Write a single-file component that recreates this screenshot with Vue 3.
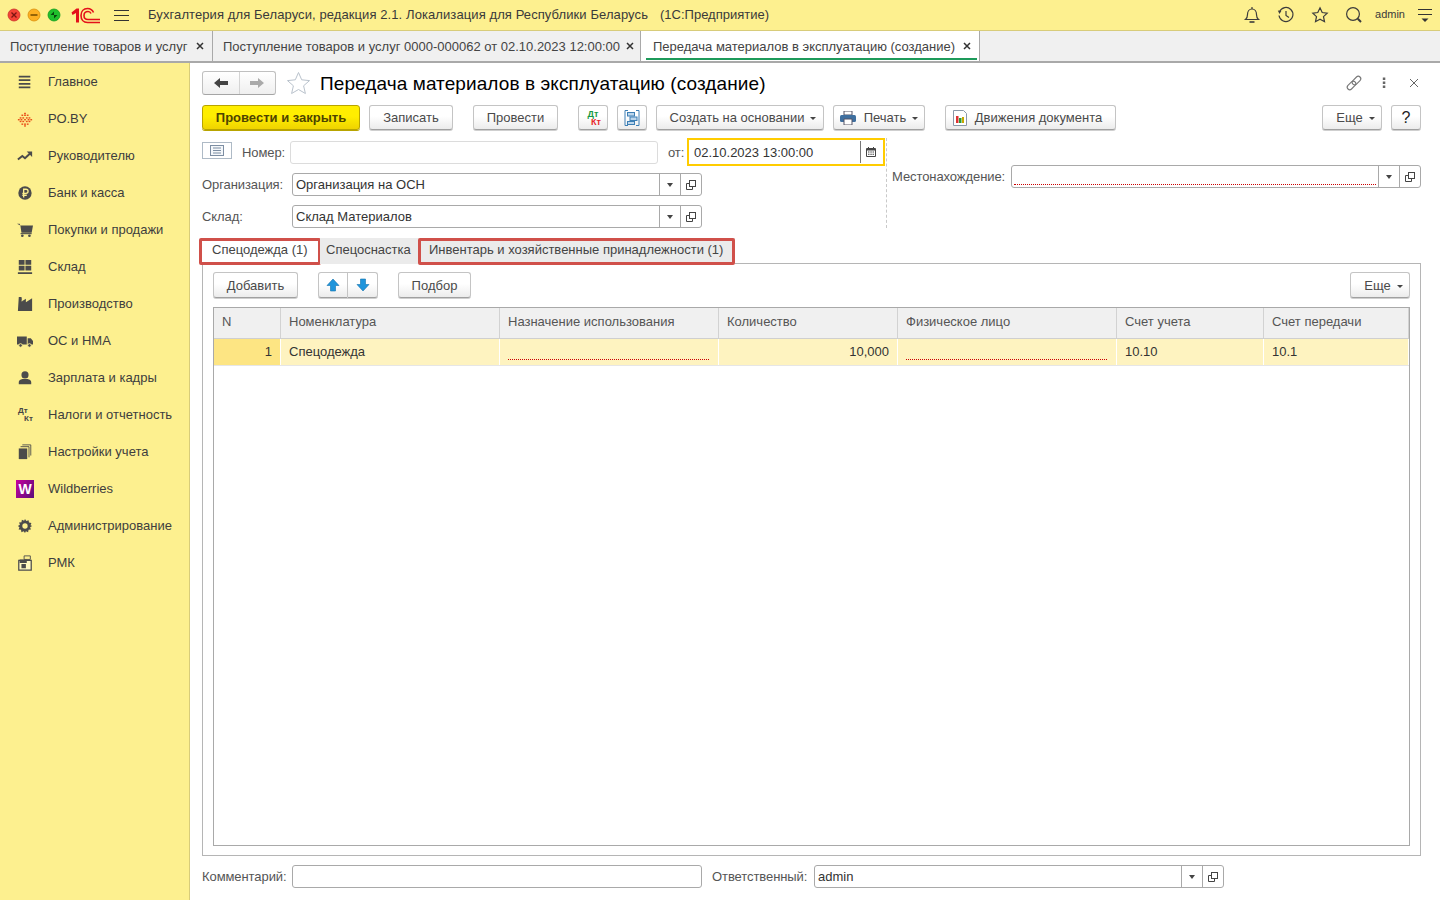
<template>
  <div class="app">
    <header class="topbar">
      <div class="lights">
        <svg width="14" height="14" viewBox="0 0 14 14"><circle cx="7" cy="7" r="6" fill="#f44336" stroke="#c9302c" stroke-width=".8"/><path d="M4.5 4.5l5 5M9.5 4.5l-5 5" stroke="#7a1512" stroke-width="1.3"/></svg>
        <svg width="14" height="14" viewBox="0 0 14 14"><circle cx="7" cy="7" r="6" fill="#fdb022" stroke="#d98e0c" stroke-width=".8"/><path d="M3.5 7h7" stroke="#7c5200" stroke-width="1.6"/></svg>
        <svg width="14" height="14" viewBox="0 0 14 14"><circle cx="7" cy="7" r="6" fill="#1fc02c" stroke="#129a1e" stroke-width=".8"/><path d="M3.5 7L7 3.5V7zM10.5 7L7 10.5V7z" fill="#07480d"/></svg>
      </div>
      <svg class="logo" width="30" height="17" viewBox="0 0 30 17" fill="none" stroke="#e3101a">
        <path d="M0.5 5.500L5.500 1.500H8V15.500H5V6L1.500 8" fill="#e3101a" stroke="none"/>
        <path d="M29 15.500H16.500C12.500 15.500 10 12.500 10 8.500S12.500 1.500 16.500 1.500C19.500 1.500 21.500 3 22.500 5.500" stroke-width="1.6"/>
        <path d="M29 12.500H17C14.500 12.500 13 11 13 8.500S14.500 4.500 17 4.500C18.500 4.500 19.500 5.200 20 6.500" stroke-width="1.6"/>
      </svg>
      <svg class="burger" width="16" height="13" viewBox="0 0 16 13"><path d="M0 1.5h15M0 6.5h15M0 11.5h15" stroke="#333" stroke-width="1"/></svg>
      <div class="app-title"><span class="app-name">Бухгалтерия для Беларуси, редакция 2.1. Локализация для Республики Беларусь</span><span class="app-kind">(1С:Предприятие)</span></div>
      <div class="top-actions">
        <svg width="18" height="18" viewBox="0 0 18 18" fill="none" stroke="#3c3c3c" stroke-width="1.2"><path d="M2.5 13.5c1.5-1.2 2-2.6 2-5 0-3 1.8-5.5 4.5-5.5s4.500 2.500 4.500 5.500c0 2.400.5 3.800 2 5z"/><path d="M6.500 16h5" stroke-width="1.6"/><path d="M9 1v2"/></svg>
        <svg width="18" height="18" viewBox="0 0 18 18" fill="none" stroke="#3c3c3c" stroke-width="1.2"><path d="M2.600 5.500A7 7 0 1 1 2 9.500"/><path d="M0.800 4.500l3.500 0.500-1.800 3z" fill="#3c3c3c" stroke="none"/><path d="M9 5v4.500l3 2"/></svg>
        <svg width="18" height="18" viewBox="0 0 18 18" fill="none" stroke="#3c3c3c" stroke-width="1.2"><path d="M9 1.800l2.200 4.700 5 .6-3.700 3.500 1 5.100L9 13.200l-4.500 2.500 1-5.100L1.800 7.100l5-.6z"/></svg>
        <svg width="18" height="18" viewBox="0 0 18 18" fill="none" stroke="#3c3c3c"><circle cx="8" cy="8" r="6.4" stroke-width="1.2"/><path d="M12.800 12.800l3.200 3.200" stroke-width="2"/></svg>
        <span class="admin">admin</span>
        <svg width="16" height="14" viewBox="0 0 16 14"><path d="M1 1.5h14M1 6.5h14" stroke="#333"/><path d="M4.500 10.500h7L8 14z" fill="#333"/></svg>
      </div>
    </header>

    <nav class="doc-tabs">
      <div v-for="t in docTabs" :key="t.text" class="doc-tab" :class="t.cls">
        <span>{{ t.text }}</span>
        <svg width="8" height="8" viewBox="0 0 8 8"><path d="M1 1l6 6M7 1L1 7" stroke="#333" stroke-width="1.5"/></svg>
      </div>
    </nav>

    <div class="body">
      <aside class="sidebar">
        <div v-for="s in sections" :key="s.text" class="section">
          <span class="section-icon">
            <span v-if="s.kind === 'dtkt'" class="mini-dtkt"><b>Дт</b><b>Кт</b></span>
            <span v-else-if="s.kind === 'wb'" class="wb">W</span>
            <svg v-else width="16" height="16" viewBox="0 0 18 18" v-html="s.icon"></svg>
          </span>
          <span>{{ s.text }}</span>
        </div>
      </aside>

      <main class="content">
        <div class="form-head">
          <div class="nav-group">
            <button class="nav-btn">
              <svg width="16" height="12" viewBox="0 0 16 12"><path d="M1 6l6-5v3h8v4H7v3z" fill="#444"/></svg>
            </button>
            <button class="nav-btn">
              <svg width="16" height="12" viewBox="0 0 16 12"><path d="M15 6L9 1v3H1v4h8v3z" fill="#aaa"/></svg>
            </button>
          </div>
          <svg class="fav" width="25" height="24" viewBox="0 0 25 24" fill="#fff" stroke="#b9c2cc"><path d="M12.500 1.500l3.200 7.300 7.800.8-5.900 5.200 1.800 7.700-6.900-4-6.900 4 1.800-7.700-5.900-5.200 7.800-.8z"/></svg>
          <h1>Передача материалов в эксплуатацию (создание)</h1>
          <div class="head-tools">
            <svg width="18" height="18" viewBox="0 0 18 18" fill="none" stroke="#777" stroke-width="1.1"><g transform="rotate(-45 9 9)"><rect x="0.500" y="6.500" width="10" height="5" rx="2.500"/><rect x="7.500" y="6.500" width="10" height="5" rx="2.500"/></g></svg>
            <svg width="18" height="18" viewBox="0 0 18 18" fill="#666"><rect x="7.800" y="3.500" width="2.500" height="2.500"/><rect x="7.800" y="7.500" width="2.500" height="2.500"/><rect x="7.800" y="11.500" width="2.500" height="2.500"/></svg>
            <svg width="18" height="18" viewBox="0 0 18 18" fill="none" stroke="#666"><path d="M5 5l8 8M13 5l-8 8"/></svg>
          </div>
        </div>

        <div class="cmd-bar">
          <button class="btn primary w-post-close">Провести и закрыть</button>
          <button class="btn w-write">Записать</button>
          <button class="btn w-post gap-l">Провести</button>
          <button class="btn w-icon gap-l">
            <span class="dtkt"><i>Дт</i><em>Кт</em></span>
          </button>
          <button class="btn w-icon">
            <svg width="16" height="16" viewBox="0 0 16 16" fill="none" stroke="#3d7fb5"><path d="M1 15.500V.5h3M1 15.500h3M15 .5v15h-3M15 .5h-3"/><rect x="3.500" y="2.500" width="7" height="3.500" fill="#bcd6ec"/><rect x="6" y="7" width="7" height="3.500" fill="#bcd6ec"/><rect x="3.500" y="11.500" width="7" height="3" fill="#bcd6ec"/></svg>
          </button>
          <button class="btn w-create">Создать на основании<span class="caret"></span></button>
          <button class="btn w-print">
            <svg width="16" height="14" viewBox="0 0 16 14"><path d="M4 0h8v4H4z" fill="#fff" stroke="#556"/><rect x="0" y="4" width="16" height="7" rx="1.5" fill="#3f6f9f"/><path d="M4 8h8v6H4z" fill="#fff" stroke="#556"/></svg>
            Печать<span class="caret"></span>
          </button>
          <button class="btn w-moves gap-l">
            <svg width="14" height="16" viewBox="0 0 14 16"><path d="M.5.5h10l3 3v12H.5z" fill="#fff" stroke="#8a98a8"/><rect x="3" y="6" width="2.500" height="7" fill="#d33"/><rect x="6" y="8" width="2.500" height="5" fill="#2a9a3a"/><rect x="9" y="7" width="2" height="6" fill="#c8a800"/></svg>
            Движения документа
          </button>
          <button class="btn w-more push">Еще<span class="caret"></span></button>
          <button class="btn w-icon help">?</button>
        </div>

        <section class="requisites">
          <div class="req-left">
            <div class="req-number">
              <button class="note-btn">
                <svg width="14" height="11" viewBox="0 0 14 11" fill="none" stroke="#7d8ea3"><rect x=".5" y=".5" width="13" height="10" fill="#f4f7fa"/><path d="M3 3h8M3 5.500h8M3 8h8"/></svg>
              </button>
              <label class="lbl-number">Номер:</label>
              <div class="input soft w-number"></div>
              <label class="lbl-from">от:</label>
              <div class="date-input">
                <span class="date-value">02.10.2023 13:00:00</span>
                <span class="date-btn">
                  <svg width="10" height="10" viewBox="0 0 10 10"><path d="M2 0h1v2H2zM7 0h1v2H7z" fill="#444"/><rect x="0" y="1" width="10" height="9" rx="1" fill="#444"/><rect x="1" y="3.500" width="8" height="5.500" fill="#fff"/><path d="M2 4.500h1.500v1H2zM4.300 4.500h1.500v1H4.300zM6.500 4.500H8v1H6.500zM2 6.700h1.500v1H2zM4.300 6.700h1.500v1H4.300zM6.500 6.700H8v1H6.500z" fill="#444"/></svg>
                </span>
              </div>
            </div>
            <div class="req-row">
              <label class="lbl-field">Организация:</label>
              <div class="input select w-org">
                <span class="input-text">Организация на ОСН</span>
                <span class="in-btn"><span class="tri"></span></span>
                <span class="in-btn open"><svg width="10" height="10" viewBox="0 0 10 10" fill="none" stroke="#444"><rect x="3.500" y=".5" width="6" height="6"/><path d="M3 3.500H.5v6h6V7"/></svg></span>
              </div>
            </div>
            <div class="req-row">
              <label class="lbl-field">Склад:</label>
              <div class="input select w-org">
                <span class="input-text">Склад Материалов</span>
                <span class="in-btn"><span class="tri"></span></span>
                <span class="in-btn open"><svg width="10" height="10" viewBox="0 0 10 10" fill="none" stroke="#444"><rect x="3.500" y=".5" width="6" height="6"/><path d="M3 3.500H.5v6h6V7"/></svg></span>
              </div>
            </div>
          </div>
          <div class="req-right">
            <label class="lbl-place">Местонахождение:</label>
            <div class="input select w-place">
              <span class="input-text"><span class="required"></span></span>
              <span class="in-btn"><span class="tri"></span></span>
              <span class="in-btn open"><svg width="10" height="10" viewBox="0 0 10 10" fill="none" stroke="#444"><rect x="3.500" y=".5" width="6" height="6"/><path d="M3 3.500H.5v6h6V7"/></svg></span>
            </div>
          </div>
        </section>

        <div class="tabs">
          <div class="tab first current marked">Спецодежда (1)</div>
          <div class="tab second">Спецоснастка</div>
          <div class="tab third marked">Инвентарь и хозяйственные принадлежности (1)</div>
        </div>

        <section class="panel">
          <div class="table-bar">
            <button class="btn small w-add">Добавить</button>
            <div class="updown">
              <button class="btn small arrow">
                <svg width="14" height="14" viewBox="0 0 14 14"><path d="M7 1l6 6.500H9.500V13h-5V7.500H1z" fill="#1f95dc" stroke="#1272ad" stroke-width=".6"/></svg>
              </button>
              <button class="btn small arrow">
                <svg width="14" height="14" viewBox="0 0 14 14"><path d="M7 13L1 6.500h3.500V1h5v5.500H13z" fill="#1f95dc" stroke="#1272ad" stroke-width=".6"/></svg>
              </button>
            </div>
            <button class="btn small w-pick">Подбор</button>
            <button class="btn small w-more push">Еще<span class="caret"></span></button>
          </div>

          <div class="grid">
            <div class="grid-row grid-head">
              <div v-for="c in columns" :key="c" class="cell">{{ c }}</div>
            </div>
            <div class="grid-row grid-line">
              <div class="cell num">1</div>
              <div class="cell">Спецодежда</div>
              <div class="cell"><span class="required"></span></div>
              <div class="cell right">10,000</div>
              <div class="cell"><span class="required"></span></div>
              <div class="cell">10.10</div>
              <div class="cell">10.1</div>
            </div>
          </div>
        </section>

        <footer class="form-foot">
          <label class="lbl-comment">Комментарий:</label>
          <div class="input w-comment"></div>
          <label class="lbl-resp">Ответственный:</label>
          <div class="input select w-resp">
            <span class="input-text">admin</span>
            <span class="in-btn"><span class="tri"></span></span>
            <span class="in-btn open"><svg width="10" height="10" viewBox="0 0 10 10" fill="none" stroke="#444"><rect x="3.500" y=".5" width="6" height="6"/><path d="M3 3.500H.5v6h6V7"/></svg></span>
          </div>
        </footer>
      </main>
    </div>
  </div>
</template>

<script setup>
const docTabs = [
  { text: 'Поступление товаров и услуг', cls: 'dt-one' },
  { text: 'Поступление товаров и услуг 0000-000062 от 02.10.2023 12:00:00', cls: 'dt-two' },
  { text: 'Передача материалов в эксплуатацию (создание)', cls: 'active' }
]

const columns = ['N', 'Номенклатура', 'Назначение использования', 'Количество', 'Физическое лицо', 'Счет учета', 'Счет передачи']

const dark = '#4b4b4b'

// PO.BY - точки ромбом
const dots = [[8, 2], [5, 4], [8, 4], [11, 4], [3, 7], [6, 7], [10, 7], [13, 7], [1, 9], [4, 9], [8, 9], [12, 9], [15, 9], [3, 11], [6, 11], [10, 11], [13, 11], [5, 14], [8, 14], [11, 14], [8, 16]]
  .map(([x, y]) => `<rect x="${x}" y="${y}" width="2" height="1.6" fill="#e8501a"/>`).join('')

const sections = [
  { text: 'Главное', icon: `<path d="M2 2h13v2H2zM2 6h13v2H2zM2 10h13v2H2zM2 14h13v2H2z" fill="${dark}"/>` },
  { text: 'РО.BY', icon: dots },
  { text: 'Руководителю', icon: `<path d="M1 13l5-4 3 2.500L15 6" fill="none" stroke="${dark}" stroke-width="2.2"/><path d="M11 4h6v6z" fill="${dark}"/>` },
  { text: 'Банк и касса', icon: `<circle cx="9" cy="9" r="7.500" fill="${dark}"/><path d="M7.500 14V4.800h2.600a2.300 2.300 0 0 1 0 4.700H6M6 11.500h5" fill="none" stroke="#fdf08f" stroke-width="1.5"/>` },
  { text: 'Покупки и продажи', icon: `<path d="M0 2h3l.8 2H18l-1.500 8H5L3.800 4" fill="${dark}"/><rect x="4" y="12.500" width="12.500" height="1.2" fill="${dark}"/><circle cx="6" cy="15.500" r="1.5" fill="${dark}"/><circle cx="14" cy="15.500" r="1.5" fill="${dark}"/>` },
  { text: 'Склад', icon: `<path d="M2 1h6.500v5.500H2zM9.500 1H16v5.500H9.500zM2 7.500h6.500V13H2zM9.500 7.500H16V13H9.500zM1 15h16v2H1z" fill="${dark}"/>` },
  { text: 'Производство', icon: `<path d="M2 1h3l1 4.500L10 3v4l7-4.500V17H1z" fill="${dark}"/><path d="M6.500 1l-1 5" stroke="#fdf08f"/>` },
  { text: 'ОС и НМА', icon: `<path d="M0 4h11v9H0zM12 6h3.500l2.500 3v4h-6z" fill="${dark}"/><circle cx="4" cy="14" r="2" fill="${dark}" stroke="#fdf08f"/><circle cx="14" cy="14" r="2" fill="${dark}" stroke="#fdf08f"/>` },
  { text: 'Зарплата и кадры', icon: `<circle cx="9" cy="5.500" r="4" fill="${dark}"/><path d="M2 16v-2.500c0-2 2-3 4-3.500h6c2 .5 4 1.500 4 3.500V16z" fill="${dark}"/>` },
  { text: 'Налоги и отчетность', kind: 'dtkt' },
  { text: 'Настройки учета', icon: `<path d="M2 5h9.500v12H2z" fill="${dark}"/><path d="M4 3h9.500v12M6 1h9.500v12" fill="none" stroke="${dark}"/>` },
  { text: 'Wildberries', kind: 'wb' },
  { text: 'Администрирование', icon: `<path d="M9 1l1.500 2.500 2.500-1 .5 2.700 2.700.5-1 2.500L17 9l-2.300 1.300 1 2.500-2.700.5-.5 2.700-2.500-1L9 17l-1.500-2-2.500 1-.5-2.700-2.700-.5 1-2.500L1 9l2.300-1.300-1-2.500 2.700-.5.5-2.700 2.500 1z" fill="${dark}"/><circle cx="9" cy="9" r="3" fill="#fdf08f"/>` },
  { text: 'РМК', icon: `<path d="M8 1h7v4H8z" fill="none" stroke="${dark}"/><path d="M2 6h14v11H2z" fill="#fff8c0" stroke="${dark}" stroke-width="1.4"/><path d="M3 5h8v4H3zM5 10h5v5H5z" fill="${dark}"/>` }
]
</script>

<style>
html, body {
  margin: 0;
  height: 100%;
  overflow: hidden;
}
</style>

<style scoped>
* {
  box-sizing: border-box;
}

.app {
  width: 1440px;
  height: 900px;
  display: flex;
  flex-direction: column;
  font-family: "Liberation Sans", Arial, sans-serif;
  font-size: 13px;
  color: #444;
  background: #fff;
}

button {
  font: inherit;
  margin: 0;
}

label {
  color: #555;
  letter-spacing: -0.08px;
}

/* верхняя панель */
.topbar {
  height: 31px;
  flex: none;
  display: flex;
  align-items: center;
  background: #fdf08f;
  border-bottom: 1px solid #d8cc7a;
  color: #3a3a3a;
}

.lights {
  display: flex;
  gap: 6px;
  margin-left: 7px;
  width: 64px;
}

.logo {
  flex: none;
}

.burger {
  flex: none;
  margin-left: 13px;
}

.app-title {
  margin: 0 0 2px 18px;
  white-space: nowrap;
}

.app-name {
  letter-spacing: 0.09px;
}

.app-kind {
  margin-left: 12px;
}

.top-actions {
  margin-left: auto;
  display: flex;
  align-items: center;
  gap: 16px;
  padding-right: 7px;
}

.admin {
  font-size: 11px;
  margin: 0 -4px 3px -4px;
}

/* вкладки документов */
.doc-tabs {
  height: 32px;
  flex: none;
  display: flex;
  background: #f0f0f0;
  border-bottom: 2px solid #a9a9a9;
}

.doc-tab {
  position: relative;
  display: flex;
  align-items: center;
  justify-content: space-between;
  padding: 0 8px 0 10px;
  border-right: 1px solid #a9a9a9;
  white-space: nowrap;
}

.dt-one {
  width: 213px;
}

.dt-two {
  width: 428px;
  padding-right: 6px;
}

.doc-tab.active {
  width: 339px;
  background: #fff;
  padding: 0 8px 0 12px;
}

.doc-tab.active::after {
  content: "";
  position: absolute;
  left: 5px;
  right: 2px;
  bottom: 1px;
  height: 2px;
  background: #1d9a5a;
}

/* боковое меню */
.body {
  flex: 1;
  min-height: 0;
  display: flex;
}

.sidebar {
  width: 190px;
  flex: none;
  background: #fdf08f;
  border-right: 1px solid #d8cc7a;
  color: #3e3e3e;
}

.section {
  height: 37px;
  display: flex;
  align-items: center;
  white-space: nowrap;
}

.section-icon {
  width: 48px;
  padding-left: 17px;
  display: flex;
  align-items: center;
  flex: none;
}

.wb {
  width: 18px;
  height: 18px;
  margin-left: -1px;
  display: flex;
  align-items: center;
  justify-content: center;
  background: linear-gradient(120deg, #c5009e, #5a0f7a);
  color: #fff;
  font-weight: bold;
  font-size: 14px;
}

.mini-dtkt {
  display: flex;
  flex-direction: column;
  width: 16px;
  font-size: 8px;
  line-height: 8px;
  color: #444;
  margin-left: 1px;
}

.mini-dtkt b + b {
  margin-left: 6px;
}

/* форма */
.content {
  flex: 1;
  min-width: 0;
  display: flex;
  flex-direction: column;
  padding: 8px 19px 12px 12px;
}

.form-head {
  height: 24px;
  flex: none;
  display: flex;
  align-items: center;
}

.nav-group {
  display: flex;
  width: 74px;
  height: 24px;
  border: 1px solid #c0c0c0;
  border-bottom-color: #a5a5a5;
  border-radius: 3px;
  background: linear-gradient(#fff, #efefef);
}

.nav-btn {
  flex: 1;
  border: 0;
  background: none;
  padding: 0;
  display: flex;
  align-items: center;
  justify-content: center;
}

.nav-btn + .nav-btn {
  border-left: 1px solid #d4d4d4;
}

.fav {
  margin: 0 9px 0 10px;
  flex: none;
}

h1 {
  margin: 2px 0 0;
  font-size: 19px;
  font-weight: normal;
  color: #000;
  letter-spacing: 0.09px;
  white-space: nowrap;
}

.head-tools {
  margin-left: auto;
  display: flex;
  gap: 12px;
  margin-right: -2px;
}

.cmd-bar {
  height: 25px;
  flex: none;
  margin-top: 10px;
  display: flex;
  gap: 9px;
}

.btn {
  height: 25px;
  flex: none;
  padding: 0;
  display: inline-flex;
  align-items: center;
  justify-content: center;
  gap: 8px;
  border: 1px solid #c4c4c4;
  border-bottom-color: #a0a0a0;
  border-radius: 3px;
  background: linear-gradient(#fff 45%, #ececec);
  box-shadow: 0 1px 0 #cfcfcf;
  color: #4a4a4a;
  white-space: nowrap;
}

.btn.primary {
  background: linear-gradient(#ffee00 45%, #efd300);
  border-color: #b8a400;
  box-shadow: 0 1px 0 #b8a400;
  color: #4d4300;
  font-weight: bold;
}

.w-post-close { width: 158px; }
.w-write { width: 84px; }
.w-post { width: 85px; }
.w-icon { width: 30px; }
.w-create { width: 168px; padding-left: 6px; }
.w-print { width: 92px; }
.w-moves { width: 171px; padding-right: 6px; }
.w-more { width: 60px; padding-left: 7px; }
.gap-l { margin-left: 11px; }
.push { margin-left: auto; }

.help {
  font-size: 16px;
  color: #222;
}

.caret {
  width: 0;
  height: 0;
  border: 3px solid transparent;
  border-top: 3px solid #444;
  border-bottom: 0;
  margin-left: -2px;
  margin-top: 2px;
}

.dtkt {
  display: flex;
  flex-direction: column;
  width: 17px;
  font-size: 9px;
  line-height: 8px;
  font-weight: bold;
}

.dtkt i {
  font-style: normal;
  color: #159a44;
}

.dtkt em {
  font-style: normal;
  color: #e8262a;
  margin-left: 6px;
}

/* реквизиты */
.requisites {
  flex: none;
  margin-top: 8px;
  display: flex;
}

.req-left {
  width: 685px;
  flex: none;
  border-right: 1px dashed #c9c9c9;
}

.req-number {
  height: 28px;
  display: flex;
  align-items: center;
}

.note-btn {
  width: 30px;
  height: 17px;
  margin-top: -4px;
  padding: 0;
  border: 1px solid #aebac6;
  background: #fff;
  display: flex;
  align-items: center;
  justify-content: center;
  flex: none;
}

.lbl-number {
  margin-left: 10px;
  width: 48px;
}

.lbl-from {
  margin-left: 10px;
  width: 20px;
}

.input {
  height: 23px;
  flex: none;
  border: 1px solid #a9a9a9;
  border-radius: 3px;
  background: #fff;
  display: flex;
  align-items: stretch;
  color: #333;
}

.input.soft {
  border-color: #dcdcdc;
}

.w-number { width: 368px; }
.w-org { width: 410px; }
.w-place { width: 410px; }
.w-comment { width: 410px; }
.w-resp { width: 410px; }

.input-text {
  flex: 1;
  min-width: 0;
  padding: 0 3px;
  line-height: 21px;
  position: relative;
}

.in-btn {
  width: 21px;
  flex: none;
  border-left: 1px solid #a9a9a9;
  display: flex;
  align-items: center;
  justify-content: center;
}

.tri {
  width: 0;
  height: 0;
  border: 3px solid transparent;
  border-top: 4px solid #444;
  border-bottom: 0;
}

.date-input {
  width: 198px;
  height: 28px;
  flex: none;
  margin-left: -1px;
  border: 2px solid #fc0;
  display: flex;
  align-items: center;
}

.date-value {
  flex: 1;
  padding-left: 5px;
  color: #333;
}

.date-btn {
  width: 23px;
  height: 22px;
  padding-right: 2px;
  border-left: 1px solid #777;
  display: flex;
  align-items: center;
  justify-content: center;
}

.req-row {
  height: 23px;
  margin-top: 9px;
  display: flex;
  align-items: center;
}

.req-row:nth-child(2) {
  margin-top: 7px;
}

.lbl-field {
  width: 90px;
  flex: none;
}

.req-right {
  flex: 1;
  padding: 27px 0 0 5px;
  display: flex;
  align-items: flex-start;
}

.lbl-place {
  width: 119px;
  flex: none;
  line-height: 23px;
}

.required {
  position: absolute;
  left: 2px;
  right: 2px;
  bottom: 2px;
  border-bottom: 1px dotted #c00;
}

/* вкладки таблиц */
.tabs {
  flex: none;
  height: 26px;
  margin-top: 10px;
  display: flex;
  padding-left: 1px;
  position: relative;
  z-index: 1;
}

.tab {
  position: relative;
  height: 26px;
  line-height: 24px;
  background: #ebebeb;
  color: #444;
  white-space: nowrap;
}

.tab.current {
  background: #fff;
}

.first { width: 117px; padding-left: 9px; }
.second { width: 99px; padding-left: 6px; }
.third { width: 316px; padding-left: 10px; }

.marked::after {
  content: "";
  position: absolute;
  inset: 0 -1px -1px -4px;
  border: 3px solid #d0504a;
  border-radius: 2px;
}

.third.marked::after {
  inset: 0 0 -1px -1px;
}

.panel {
  flex: 1;
  min-height: 0;
  margin-top: -1px;
  border: 1px solid #b5b5b5;
  padding: 8px 10px 9px;
  display: flex;
  flex-direction: column;
}

.table-bar {
  height: 26px;
  flex: none;
  display: flex;
}

.small {
  height: 26px;
}

.w-add { width: 85px; }
.w-pick { width: 73px; margin-left: 20px; }

.updown {
  display: flex;
  margin-left: 20px;
}

.arrow {
  width: 30px;
  border-radius: 0;
}

.arrow:first-child {
  border-radius: 3px 0 0 3px;
}

.arrow + .arrow {
  border-left: 0;
  border-radius: 0 3px 3px 0;
}

.grid {
  flex: 1;
  min-height: 0;
  margin-top: 9px;
  border: 1px solid #a9a9a9;
}

.grid-row {
  display: grid;
  grid-template-columns: 67px 219px 219px 179px 219px 147px 1fr;
}

.grid-head {
  height: 31px;
  background: #f0f0f0;
  border-bottom: 1px solid #cfcfcf;
  color: #555;
}

.grid-head .cell {
  line-height: 28px;
  border-right: 1px solid #d2d2d2;
}

.grid-head .cell:first-child {
  padding-left: 8px;
}

.grid-line {
  height: 27px;
  background: #fef3c0;
  border-bottom: 1px solid #e6e6e6;
  color: #333;
}

.grid-line .cell {
  line-height: 25px;
  border-right: 1px solid #fff;
}

.cell {
  position: relative;
  padding: 0 8px;
  white-space: nowrap;
}

.cell .required {
  left: 8px;
  right: 9px;
  bottom: 5px;
}

.num {
  background: #fde583;
  text-align: right;
}

.right {
  text-align: right;
}

/* низ формы */
.form-foot {
  height: 23px;
  flex: none;
  margin-top: 9px;
  display: flex;
  align-items: center;
}

.lbl-comment {
  width: 90px;
  flex: none;
}

.lbl-resp {
  width: 102px;
  flex: none;
  margin-left: 10px;
}
</style>
